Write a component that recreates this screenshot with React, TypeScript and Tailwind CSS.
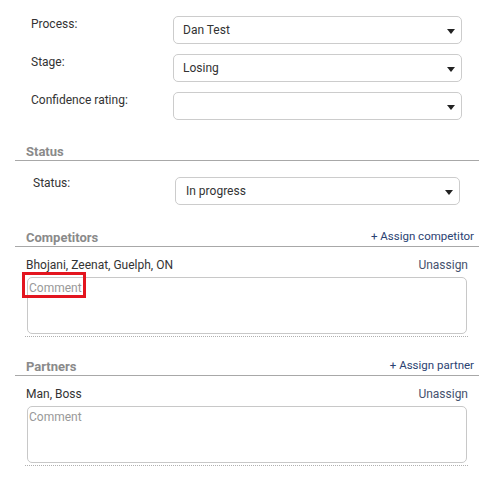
import React from "react";

function Caret() {
  return (
    <svg width="8" height="5" viewBox="0 0 8 5" className="mt-[3px] shrink-0">
      <path d="M0 0 L8 0 L4 5 Z" fill="#222" />
    </svg>
  );
}

function SelectBox({ value, pl = "pl-[9px]" }: { value: string; pl?: string }) {
  return (
    <div
      className={`flex h-[28px] flex-1 items-center justify-between rounded-[5px] border border-[#cccccc] bg-white ${pl} pr-[6px] text-[12px] text-[#333]`}
    >
      <span>{value}</span>
      <Caret />
    </div>
  );
}

function Header({ title, link }: { title: string; link?: string }) {
  return (
    <div className="flex items-end justify-between border-b border-[#a8a8a8] pl-[11px] pr-[5px]">
      <span className="text-[13px] font-bold leading-[16px] text-[#8a8a8a]">{title}</span>
      {link && (
        <span className="pb-[3px] text-[11.5px] leading-[14px] text-[#2b4272]">{link}</span>
      )}
    </div>
  );
}

function Entry({ name, marked }: { name: string; marked?: boolean }) {
  return (
    <div className="relative ml-[10px] mr-[11px] border-b border-dotted border-[#b0b0b0] pb-[2px] pt-[10px]">
      <div className="flex justify-between pl-[1px] text-[12px] leading-[17px]">
        <span className="text-[#333]">{name}</span>
        <span className="text-[#45526e]">Unassign</span>
      </div>
      <textarea
        placeholder="Comment"
        className="mx-[2px] mt-[3px] block h-[57px] w-[calc(100%-3px)] resize-none rounded-[5px] border border-[#c8c8c8] px-[1px] py-[1px] text-[12px] text-[#333] outline-none placeholder:text-[#999]"
        style={{ fontFamily: "Roboto, sans-serif" }}
      />
      {marked && (
        <div className="pointer-events-none absolute left-[-3px] top-[25px] h-[26px] w-[64px] border-[3px] border-[#e3151f]" />
      )}
    </div>
  );
}

export default function App() {
  return (
    <div className="w-[491px] bg-white pl-[15px] pr-[12px] pt-[16px] pb-[20px]" style={{ fontFamily: "Roboto, sans-serif" }}>
      <div className="flex flex-col gap-[10px] pl-[16px] pr-[17px]">
        {[
          ["Process:", "Dan Test"],
          ["Stage:", "Losing"],
          ["Confidence rating:", ""],
        ].map(([label, value]) => (
          <div key={label} className="flex items-start">
            <div className="w-[142px] shrink-0 text-[12px] leading-[17px] text-[#333]">{label}</div>
            <SelectBox value={value} />
          </div>
        ))}
      </div>

      <div className="mt-[24px]">
        <Header title="Status" />
      </div>
      <div className="mt-[16px] flex items-start pl-[18px] pr-[19px]">
        <div className="w-[142px] shrink-0 text-[12px] leading-[13px] text-[#333]">Status:</div>
        <SelectBox value="In progress" pl="pl-[10px]" />
      </div>

      <div className="mt-[24px]">
        <Header title="Competitors" link="+ Assign competitor" />
      </div>
      <Entry name="Bhojani, Zeenat, Guelph, ON" marked />

      <div className="mt-[21px]">
        <Header title="Partners" link="+ Assign partner" />
      </div>
      <Entry name="Man, Boss" />
    </div>
  );
}
